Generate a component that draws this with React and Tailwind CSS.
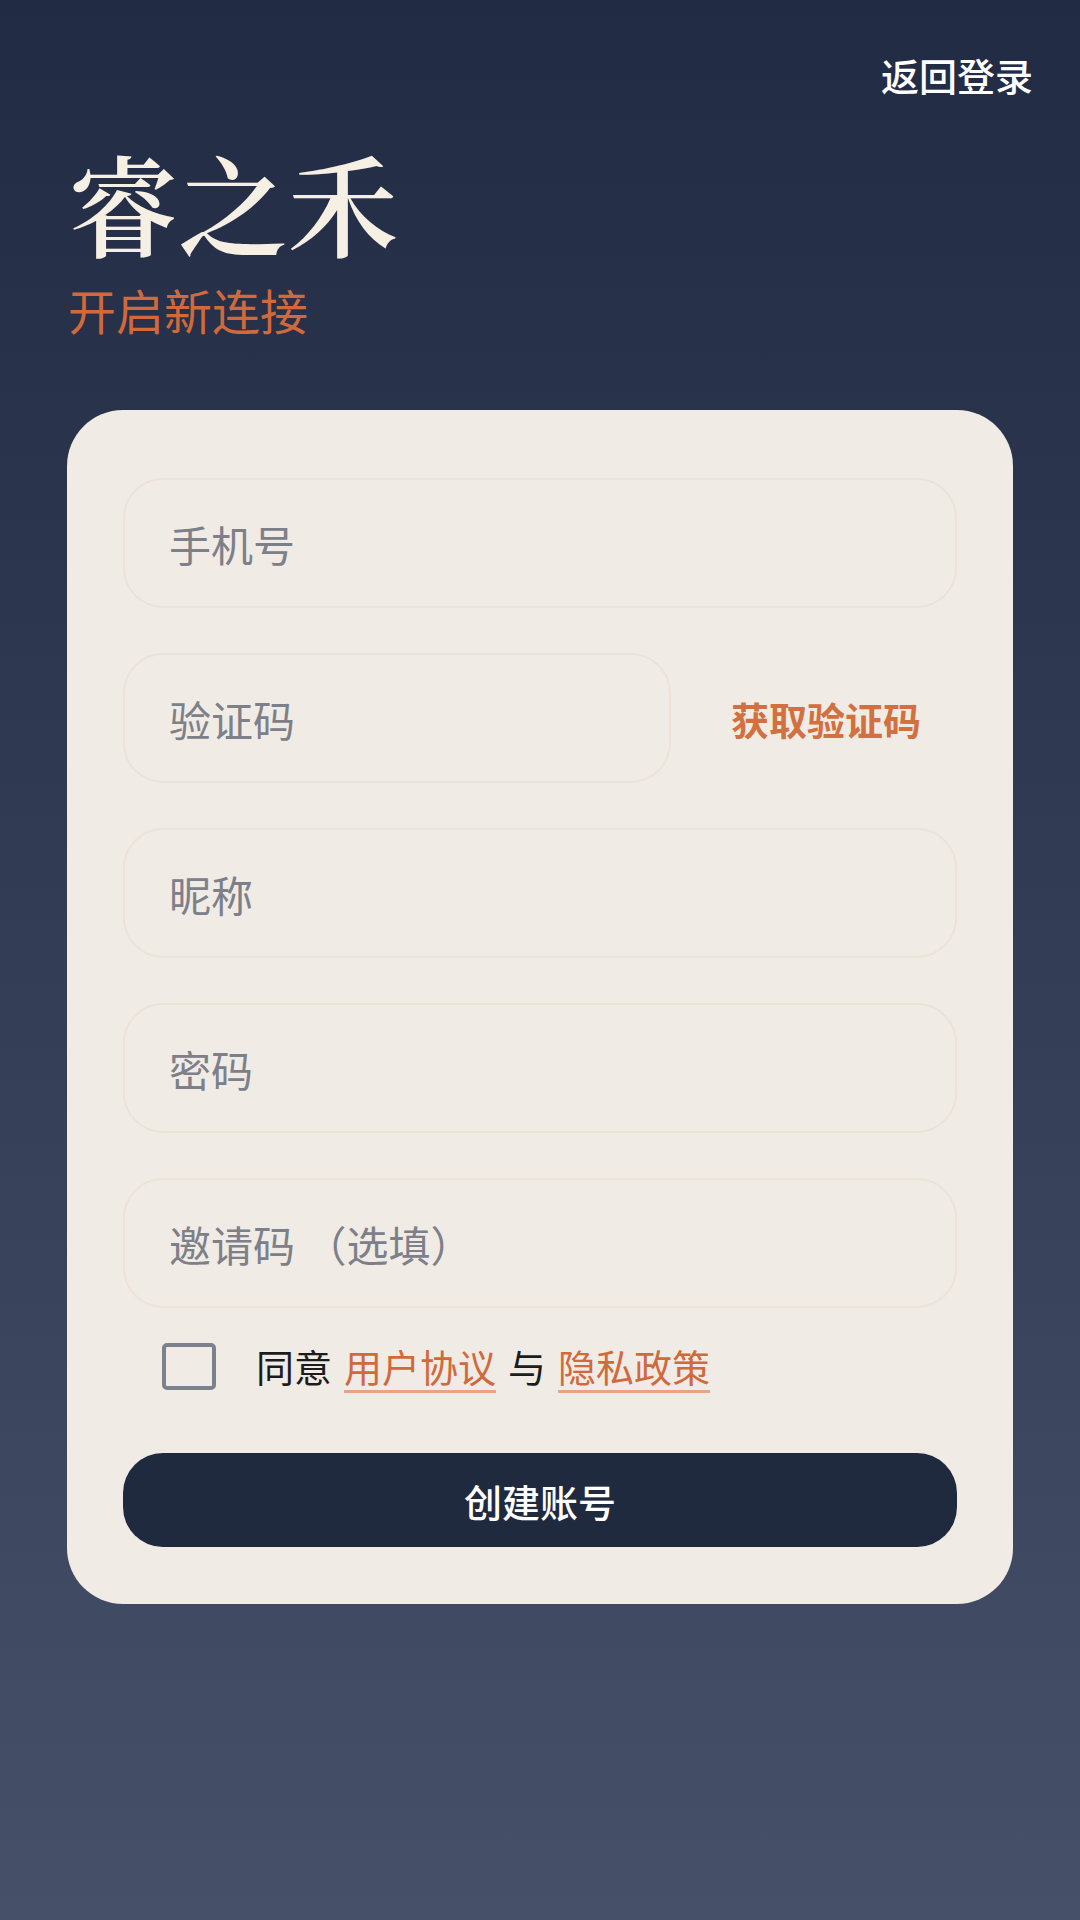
import { useState } from "react";

const fields = [
  { key: "phone", placeholder: "手机号", type: "tel" },
  { key: "nickname", placeholder: "昵称", type: "text" },
  { key: "password", placeholder: "密码", type: "password" },
  { key: "invite", placeholder: "邀请码 （选填）", type: "text" },
];

function Field({ placeholder, type = "text", className = "" }) {
  return (
    <input
      type={type}
      placeholder={placeholder}
      className={`h-[130px] rounded-[40px] border-2 border-[#ede2d8] bg-transparent px-[44px] text-[42px] text-[#2a2f3a] placeholder:text-[#7d8089] outline-none ${className}`}
    />
  );
}

export default function App() {
  const [agreed, setAgreed] = useState(false);

  return (
    <div
      className="min-h-[1920px] w-full bg-gradient-to-b from-[#212b43] to-[#465169] flex flex-col"
      style={{ fontFamily: '"Noto Sans CJK SC", "Noto Sans", sans-serif' }}
    >
      {/* top bar */}
      <div className="flex justify-end pt-[56px] pr-[47px]">
        <button className="text-[38px] leading-none font-medium text-white">返回登录</button>
      </div>

      {/* brand */}
      <div className="px-[68px] mt-[44px]">
        <h1
          className="text-[110px] leading-[1.15] font-semibold text-[#f5efe4]"
          style={{ fontFamily: '"Noto Serif CJK SC", "Noto Sans CJK SC", serif' }}
        >
          睿之禾
        </h1>
        <p className="mt-[18px] text-[48px] leading-[1.1] text-[#d0693c]">开启新连接</p>
      </div>

      {/* form card */}
      <div className="mt-[75px] mx-[67px] rounded-[56px] bg-[#f0ebe4] px-[56px] pt-[68px] pb-[57px] flex flex-col">
        <div className="flex flex-col gap-[45px]">
          <Field placeholder="手机号" type="tel" />
          <div className="flex items-center">
            <Field placeholder="验证码" className="w-[548px]" />
            <button className="flex-1 pl-[24px] text-[38px] font-semibold text-[#d2703f]">获取验证码</button>
          </div>
          {fields.slice(1).map((f) => (
            <Field key={f.key} placeholder={f.placeholder} type={f.type} />
          ))}
        </div>

        <div className="mt-[33px] flex items-center pl-[39px] h-[50px]">
          <button
            onClick={() => setAgreed(!agreed)}
            className={`w-[54px] h-[47px] rounded-[5px] border-[4px] border-[#7c828c] ${agreed ? "bg-[#d2703f]" : ""}`}
          />
          <p className="ml-[40px] text-[38px] leading-none text-[#1c1c1c]">
            同意
            <a className="mx-[12px] text-[#d0693c] underline decoration-[#e9a583] decoration-[3px] underline-offset-[8px]">用户协议</a>
            与
            <a className="ml-[12px] text-[#d0693c] underline decoration-[#e9a583] decoration-[3px] underline-offset-[8px]">隐私政策</a>
          </p>
        </div>

        <button className="mt-[62px] h-[94px] rounded-[40px] bg-[#1f2a3e] text-[38px] font-medium text-white">
          创建账号
        </button>
      </div>
    </div>
  );
}
